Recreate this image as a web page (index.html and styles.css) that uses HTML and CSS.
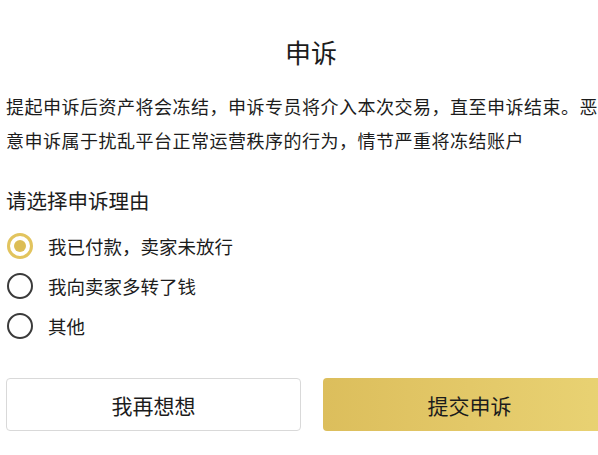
FILE: index.html
```html
<!DOCTYPE html>
<html lang="zh-CN">
<head>
<meta charset="utf-8">
<title>申诉</title>
<link rel="stylesheet" href="styles.css">
</head>
<body>
<div class="page">
  <h1 class="title">申诉</h1>
  <p class="notice">提起申诉后资产将会冻结，申诉专员将介入本次交易，直至申诉结束。恶<br>意申诉属于扰乱平台正常运营秩序的行为，情节严重将冻结账户</p>
  <div class="label">请选择申诉理由</div>
  <ul class="options">
    <li class="option selected"><span class="radio"></span><span class="option-text">我已付款，卖家未放行</span></li>
    <li class="option"><span class="radio"></span><span class="option-text">我向卖家多转了钱</span></li>
    <li class="option"><span class="radio"></span><span class="option-text">其他</span></li>
  </ul>
  <div class="actions">
    <button class="btn btn-cancel">我再想想</button>
    <button class="btn btn-submit">提交申诉</button>
  </div>
</div>
</body>
</html>
```

FILE: styles.css
```css
html, body {
  margin: 0;
  padding: 0;
  overflow: hidden;
  background: #ffffff;
}
body {
  font-family: "Noto Sans CJK SC", "Noto Sans", sans-serif;
  color: #1c1c1c;
}
.page {
  width: 610px;
  padding: 35px 6px 0;
}
.title {
  margin: 0;
  font-size: 26px;
  line-height: 34px;
  font-weight: 400;
  text-align: center;
}
.notice {
  margin: 20px 0 0;
  font-size: 18px;
  line-height: 34px;
  letter-spacing: 0.5px;
  white-space: nowrap;
}
.label {
  margin-top: 29px;
  font-size: 20.5px;
  line-height: 28px;
}
.options {
  list-style: none;
  margin: 12px 0 0;
  padding: 0;
}
.option {
  display: flex;
  align-items: center;
  height: 40px;
}
.radio {
  box-sizing: border-box;
  width: 26px;
  height: 26px;
  border-radius: 50%;
  border: 2.5px solid #3a3a3a;
  margin-left: 1px;
  margin-right: 15px;
  display: flex;
  align-items: center;
  justify-content: center;
}
.selected .radio {
  border: 3px solid #e2c45e;
}
.selected .radio::after {
  content: "";
  width: 12px;
  height: 12px;
  border-radius: 50%;
  background: #dcbd56;
}
.option-text {
  font-size: 18.5px;
  line-height: 28px;
}
.actions {
  display: flex;
  gap: 22px;
  margin-top: 32px;
}
.btn {
  flex: 1;
  height: 53px;
  border-radius: 4px;
  font-family: inherit;
  font-size: 21px;
  color: #1c1c1c;
  cursor: pointer;
}
.btn-cancel {
  background: #ffffff;
  border: 1px solid #d9d9d9;
}
.btn-submit {
  border: none;
  background: linear-gradient(90deg, #dcbe5c 0%, #e3c868 50%, #e9d374 100%);
}
```
